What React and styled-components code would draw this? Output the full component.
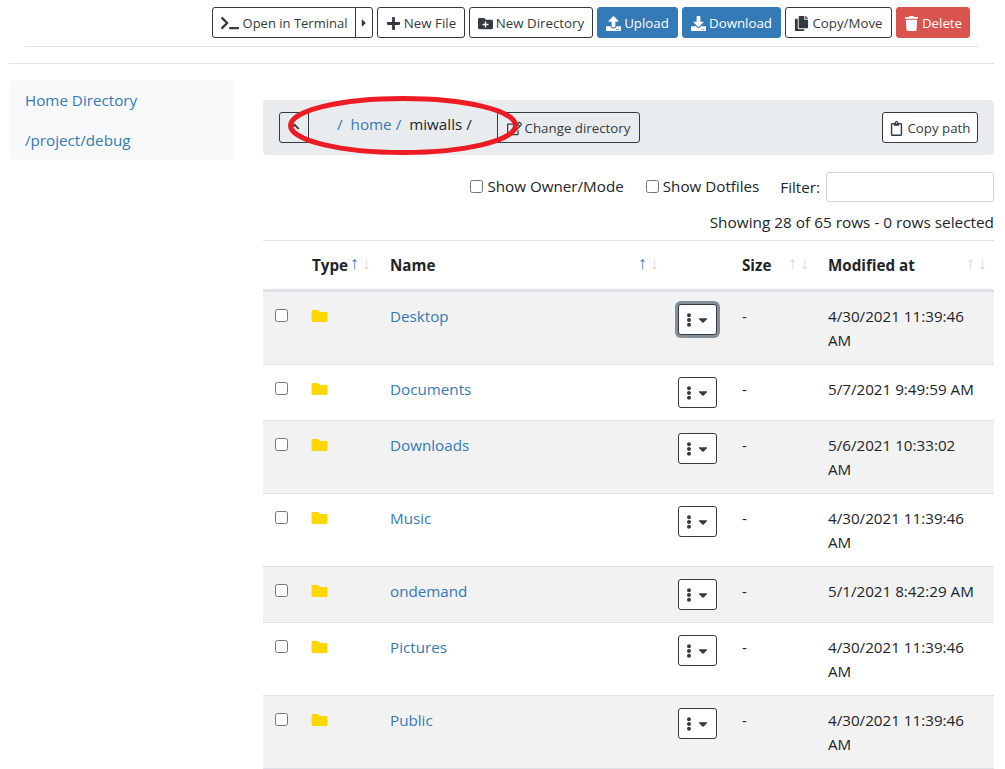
import React from "react";
import styled, { createGlobalStyle } from "styled-components";
import {
	FaTerminal,
	FaPlus,
	FaFolderPlus,
	FaUpload,
	FaDownload,
	FaCopy,
	FaTrash,
	FaFolder,
	FaEllipsisV,
	FaRegClipboard,
	FaRegEdit,
	FaChevronUp,
	FaCaretRight,
	FaCaretDown,
} from "react-icons/fa";

const FONT = `"Open Sans", "Noto Sans", "Liberation Sans", sans-serif`;

const rows = [
	{ name: "Desktop", date: ["4/30/2021 11:39:46", "AM"], focused: true },
	{ name: "Documents", date: ["5/7/2021 9:49:59 AM"] },
	{ name: "Downloads", date: ["5/6/2021 10:33:02", "AM"] },
	{ name: "Music", date: ["4/30/2021 11:39:46", "AM"] },
	{ name: "ondemand", date: ["5/1/2021 8:42:29 AM"] },
	{ name: "Pictures", date: ["4/30/2021 11:39:46", "AM"] },
	{ name: "Public", date: ["4/30/2021 11:39:46", "AM"] },
];

const App = () => (
	<>
		<GlobalStyle />
		<Page>
			<Toolbar>
				<SplitGroup>
					<SplitMain>
						<FaTerminal /> Open in Terminal
					</SplitMain>
					<SplitCaret>
						<FaCaretRight />
					</SplitCaret>
				</SplitGroup>
				<ToolButton $width={88}>
					<FaPlus /> New File
				</ToolButton>
				<ToolButton $width={124}>
					<FaFolderPlus /> New Directory
				</ToolButton>
				<ToolButton $kind="primary" $width={81}>
					<FaUpload /> Upload
				</ToolButton>
				<ToolButton $kind="primary" $width={99}>
					<FaDownload /> Download
				</ToolButton>
				<ToolButton $width={107}>
					<FaCopy /> Copy/Move
				</ToolButton>
				<ToolButton $kind="danger" $width={74}>
					<FaTrash /> Delete
				</ToolButton>
			</Toolbar>
			<ToolbarRule />
			<PageRule />
			<Columns>
				<Sidebar>
					<SideLink>Home Directory</SideLink>
					<SideLink>/project/debug</SideLink>
				</Sidebar>
				<Main>
					<PathPanel>
						<PathLeft>
							<UpButton>
								<FaChevronUp />
							</UpButton>
							<Crumbs>
								<CrumbLink>/</CrumbLink>
								<CrumbItem>
									<CrumbLink>home</CrumbLink>
									<CrumbLink>/</CrumbLink>
								</CrumbItem>
								<CrumbItem>
									<span>miwalls</span>
									<span>/</span>
								</CrumbItem>
							</Crumbs>
							<ChangeButton>
								<FaRegEdit /> Change directory
							</ChangeButton>
						</PathLeft>
						<ToolButton $width={96}>
							<FaRegClipboard /> Copy path
						</ToolButton>
						<Circle viewBox="0 0 240 66" aria-hidden="true">
							<ellipse cx="123" cy="30.5" rx="112.5" ry="27" />
						</Circle>
					</PathPanel>
					<Options>
						<OptionLabel $space={22}>
							<input type="checkbox" /> Show Owner/Mode
						</OptionLabel>
						<OptionLabel $space={21}>
							<input type="checkbox" /> Show Dotfiles
						</OptionLabel>
						<FilterLabel>
							Filter: <FilterInput />
						</FilterLabel>
					</Options>
					<Info>Showing 28 of 65 rows - 0 rows selected</Info>
					<FileTable>
						<colgroup>
							<col width="37" />
							<col width="78" />
							<col width="288" />
							<col width="64" />
							<col width="86" />
							<col width="178" />
						</colgroup>
						<thead>
							<tr>
								<HeadCell />
								<HeadCell>
									Type
									<SortArrows active />
								</HeadCell>
								<HeadCell>
									Name
									<SortArrows active />
								</HeadCell>
								<HeadCell />
								<HeadCell>
									Size
									<SortArrows />
								</HeadCell>
								<HeadCell>
									Modified at
									<SortArrows />
								</HeadCell>
							</tr>
						</thead>
						<tbody>
							{rows.map((row, i) => (
								<Row key={row.name} $odd={i % 2 === 0}>
									<Cell>
										<RowCheck type="checkbox" />
									</Cell>
									<Cell>
										<FolderIcon />
									</Cell>
									<Cell>
										<FileLink>{row.name}</FileLink>
									</Cell>
									<Cell>
										<MenuButton $focused={row.focused}>
											<FaEllipsisV />
											<FaCaretDown />
										</MenuButton>
									</Cell>
									<Cell>-</Cell>
									<Cell>
										{row.date.map((line) => (
											<div key={line}>{line}</div>
										))}
									</Cell>
								</Row>
							))}
						</tbody>
					</FileTable>
				</Main>
			</Columns>
		</Page>
	</>
);

const SortArrows = ({ active }) => (
	<Arrows>
		<Arrow $active={active}>↑</Arrow>
		<Arrow>↓</Arrow>
	</Arrows>
);

const GlobalStyle = createGlobalStyle`
	html, body {
		margin: 0;
		height: 769px;
		overflow: hidden;
		background: #fff;
	}
	* {
		box-sizing: border-box;
	}
`;

const Page = styled.div`
	font-family: ${FONT};
	font-size: 15.2px;
	line-height: 24px;
	color: #212529;
	width: 1005px;
	height: 769px;
	overflow: hidden;
	padding: 7px 11px 0 9px;
`;

const Toolbar = styled.div`
	display: flex;
	justify-content: flex-end;
	gap: 4px;
	padding-right: 24px;
`;

const buttonBase = `
	display: inline-flex;
	align-items: center;
	justify-content: center;
	gap: 3px;
	height: 31px;
	padding: 1px 0 0;
	font-family: ${FONT};
	font-size: 13.3px;
	line-height: 21px;
	white-space: nowrap;
	border: 1px solid #343a40;
	border-radius: 3px;
	background: #fff;
	color: #343a40;

	svg {
		font-size: 15px;
	}
`;

const ToolButton = styled.button`
	${buttonBase}
	width: ${(p) => p.$width}px;
	${(p) =>
		p.$kind === "primary" &&
		"background: #337ab7; border-color: #337ab7; color: #fff;"}
	${(p) =>
		p.$kind === "danger" &&
		"background: #d9534f; border-color: #d9534f; color: #fff;"}
`;

const SplitGroup = styled.div`
	display: flex;
`;

const SplitMain = styled.button`
	${buttonBase}
	width: 144px;
	gap: 4px;
	font-size: 13px;
	border-radius: 3px 0 0 3px;

	svg {
		font-size: 18px;
	}
`;

const SplitCaret = styled.button`
	${buttonBase}
	width: 18px;
	margin-left: -1px;
	border-radius: 0 3px 3px 0;

	svg {
		font-size: 12px;
	}
`;

const ToolbarRule = styled.hr`
	margin: 8px 16px 0 16px;
	border: 0;
	border-top: 1px solid #dee2e6;
`;

const PageRule = styled.hr`
	margin: 16px 0 16px;
	border: 0;
	border-top: 1px solid #dee2e6;
`;

const Columns = styled.div`
	display: grid;
	grid-template-columns: 224px 731px;
	gap: 30px;
`;

const Sidebar = styled.nav`
	align-self: start;
	display: flex;
	flex-direction: column;
	background: #f8f9fa;
	border-radius: 3px;
	height: 80px;
`;

const SideLink = styled.a`
	display: block;
	height: 40px;
	padding: 8px 16px;
	color: #337ab7;
`;

const Main = styled.main`
	padding-top: 20px;
`;

const PathPanel = styled.div`
	position: relative;
	display: flex;
	align-items: center;
	justify-content: space-between;
	height: 55px;
	padding: 0 16px;
	background: #e9ecef;
	border-radius: 4px;
`;

const PathLeft = styled.div`
	display: flex;
	align-items: flex-start;
`;

const UpButton = styled.button`
	${buttonBase}
	background: transparent;
	width: 30px;
	padding: 0 0 3px;
	border-radius: 3px 0 0 3px;

	svg {
		font-size: 11px;
	}
`;

const Crumbs = styled.div`
	display: flex;
	align-items: center;
	gap: 8px;
	width: 188px;
	height: 31px;
	margin-top: -4px;
	padding-left: 28px;
`;

const CrumbItem = styled.span`
	display: inline-flex;
	gap: 4px;
`;

const CrumbLink = styled.a`
	color: #337ab7;
`;

const ChangeButton = styled.button`
	${buttonBase}
	background: transparent;
	width: 143px;
	border-radius: 0 3px 3px 0;
`;

const Circle = styled.svg`
	position: absolute;
	left: 17px;
	top: -5px;
	width: 240px;
	height: 66px;
	pointer-events: none;

	ellipse {
		fill: none;
		stroke: #ed1c24;
		stroke-width: 5;
	}
`;

const Options = styled.div`
	display: flex;
	align-items: center;
	justify-content: flex-end;
	height: 30px;
	margin-top: 17px;
`;

const OptionLabel = styled.label`
	display: inline-flex;
	align-items: center;
	gap: 4px;
	margin-right: ${(p) => p.$space}px;
	padding-bottom: 2px;

	input {
		width: 13px;
		height: 13px;
		margin: 0;
	}
`;

const FilterLabel = styled.label`
	display: inline-flex;
	align-items: center;
	gap: 6px;
`;

const FilterInput = styled.input`
	width: 168px;
	height: 30px;
	border: 1px solid #ced4da;
	border-radius: 3px;
`;

const Info = styled.div`
	text-align: right;
	font-size: 15.35px;
	height: 24px;
	margin-top: 8px;
	margin-bottom: 6px;
`;

const FileTable = styled.table`
	width: 731px;
	table-layout: fixed;
	border-collapse: collapse;
`;

const HeadCell = styled.th`
	position: relative;
	height: 50px;
	padding: 10px 12px;
	text-align: left;
	font-weight: 700;
	white-space: nowrap;
	border-top: 1px solid #dee2e6;
	border-bottom: 3px solid #dee2e6;
`;

const Arrows = styled.span`
	position: absolute;
	right: 7px;
	top: 10px;
	display: inline-flex;
	gap: 3px;
	font-family: "Liberation Sans", sans-serif;
	font-size: 18px;
	font-weight: 400;
`;

const Arrow = styled.span`
	color: ${(p) => (p.$active ? "#337ab7" : "#d5d8dc")};
`;

const Row = styled.tr`
	background: ${(p) => (p.$odd ? "#f2f2f2" : "#fff")};
	border-bottom: 1px solid #dee2e6;
`;

const Cell = styled.td`
	padding: 12px;
	vertical-align: top;
`;

const RowCheck = styled.input`
	display: block;
	width: 13px;
	height: 13px;
	margin: 5px 0 0;
`;

const FolderIcon = styled(FaFolder)`
	display: block;
	margin: 4px 0 0 -1px;
	width: 17px;
	height: 16px;
	color: #ffd700;
`;

const FileLink = styled.a`
	color: #337ab7;
`;

const MenuButton = styled.button`
	${buttonBase}
	gap: 0;
	width: 39px;
	padding: 0 3px 0 0;

	svg {
		font-size: 14px;
	}
	${(p) => p.$focused && "box-shadow: 0 0 0 3px #868e96;"}
`;

export default App;
